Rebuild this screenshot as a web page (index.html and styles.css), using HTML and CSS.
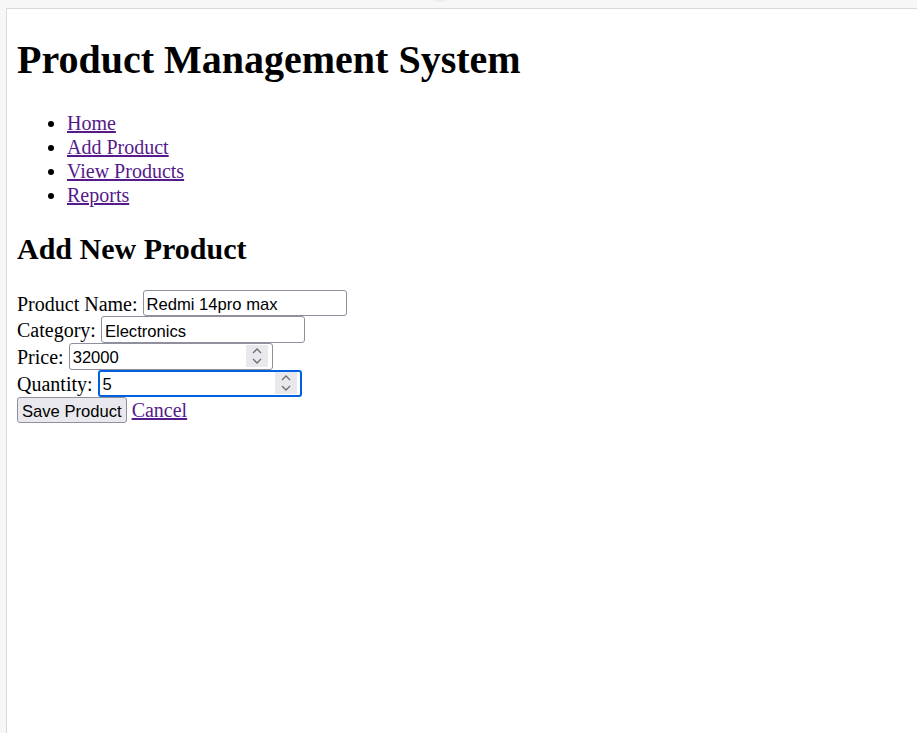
FILE: index.html
```html
<!DOCTYPE html>
<html>
<head>
<meta charset="utf-8">
<title>Product Management System</title>
<link rel="stylesheet" href="styles.css">
</head>
<body>
<div class="tab-notch"></div>
<div class="frame">
  <h1 class="title">Product Management System</h1>
  <ul class="nav">
    <li><a href="#">Home</a></li>
    <li><a href="#">Add Product</a></li>
    <li><a href="#">View Products</a></li>
    <li><a href="#">Reports</a></li>
  </ul>
  <h2 class="subtitle">Add New Product</h2>
  <form class="form">
    <label class="lbl">Product Name:</label> <input class="field" type="text" value="Redmi 14pro max"><br>
    <label class="lbl">Category:</label> <input class="field" type="text" value="Electronics"><br>
    <label class="lbl">Price:</label> <span class="num"><input class="field" type="text" value="32000"><span class="spin"><svg width="12" height="18" viewBox="0 0 12 18"><path d="M2 6 L6 2 L10 6 M2 12 L6 16 L10 12" fill="none" stroke="#6d6d75" stroke-width="1.3"/></svg></span></span><br>
    <label class="lbl">Quantity:</label> <span class="num"><input class="field focused" type="text" value="5"><span class="spin"><svg width="12" height="18" viewBox="0 0 12 18"><path d="M2 6 L6 2 L10 6 M2 12 L6 16 L10 12" fill="none" stroke="#6d6d75" stroke-width="1.3"/></svg></span></span><br>
    <button class="btn" type="button">Save Product</button> <a href="#">Cancel</a>
  </form>
</div>
</body>
</html>
```
FILE: styles.css
```css
html, body {
  margin: 0;
  padding: 0;
  height: 100%;
}
body {
  background: #f7f7f8;
  overflow: hidden;
  position: relative;
}
.tab-notch {
  position: absolute;
  left: 432px;
  top: -6px;
  width: 16px;
  height: 8px;
  border-radius: 50%;
  background: #ececee;
}
.frame {
  margin: 8px 0 0 6px;
  height: calc(100% - 9px);
  background: #fff;
  border-top: 1px solid #d9d9dc;
  border-left: 1px solid #d9d9dc;
  padding: 0 10px;
  font-family: "Liberation Serif", "Times New Roman", serif;
  font-size: 20px;
  color: #000;
}
a {
  color: #551a8b;
}
.title {
  font-size: 40px;
  font-weight: bold;
  margin: 27.8px 0;
  line-height: 46px;
}
.nav {
  margin: 20px 0 18px;
  padding-left: 50px;
  line-height: 24px;
}
.subtitle {
  font-size: 30px;
  font-weight: bold;
  margin: 25px 0 24px;
  line-height: 34px;
}
.form {
  line-height: 26.75px;
}
.lbl {
  line-height: 20px;
  vertical-align: -1px;
}
.field {
  font-family: "Liberation Sans", Arial, sans-serif;
  font-size: 16.6px;
  line-height: 19px;
  width: 204px;
  height: 26.75px;
  box-sizing: border-box;
  padding: 4.75px 3px 1px;
  border: 1px solid #8f8f9d;
  border-radius: 3px;
  color: #000;
  background: #fff;
  vertical-align: top;
  margin: 0;
}
.field.focused {
  border: 2px solid #0060df;
  padding: 3.75px 3px 0;
  outline: none;
}
.num {
  position: relative;
  display: inline-block;
  vertical-align: top;
  height: 26.75px;
}
.spin {
  position: absolute;
  right: 5px;
  top: 2px;
  width: 22px;
  height: 22px;
  background: #e9e9ed;
  display: flex;
  align-items: center;
  justify-content: center;
}
.btn {
  font-family: "Liberation Sans", Arial, sans-serif;
  font-size: 16.6px;
  line-height: 19px;
  padding: 3px 4px 0;
  height: 26px;
  border: 1px solid #8f8f9d;
  border-radius: 3px;
  background: #e9e9ed;
  color: #000;
  margin: 0;
  vertical-align: top;
}
```
